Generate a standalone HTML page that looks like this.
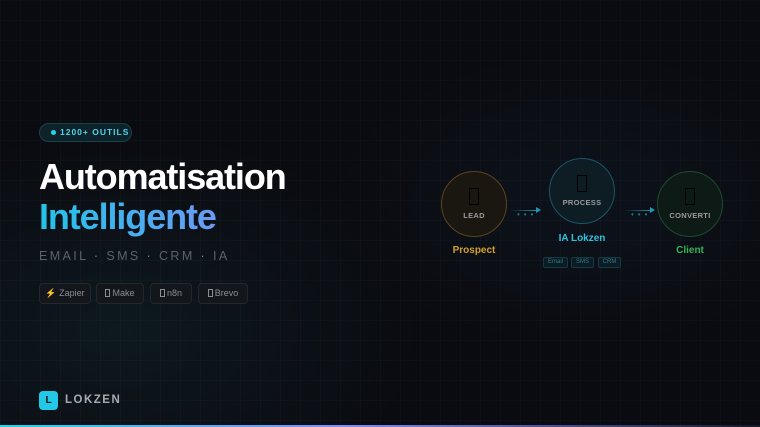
<!DOCTYPE html><html><head><style>
*{margin:0;padding:0;box-sizing:border-box}
body{width:760px;height:427px;overflow:hidden;background:#0a0b10;font-family:"Liberation Sans",sans-serif;position:relative}
.bg{position:absolute;inset:0;background:radial-gradient(ellipse 300px 200px at 120px 330px,rgba(20,50,60,.35),transparent),radial-gradient(ellipse 250px 150px at 580px 200px,rgba(20,40,60,.25),transparent);}
.grid{position:absolute;inset:0;background-image:linear-gradient(rgba(255,255,255,.018) 1px,transparent 1px),linear-gradient(90deg,rgba(255,255,255,.018) 1px,transparent 1px);background-size:20px 20px}
.a{position:absolute}
.badge{left:39px;top:123px;width:93px;height:19px;border:1px solid #17424b;background:#0d2229;border-radius:10px;color:#4fd5ea;font-size:8.5px;font-weight:bold;letter-spacing:1px;line-height:17px;padding-left:20px}
.badge:before{content:"";position:absolute;left:11px;top:6px;width:5px;height:5px;border-radius:50%;background:#22d3ee}
h1{position:absolute;left:39px;top:155px;font-size:36px;font-weight:bold;color:#fff;letter-spacing:-1.1px;line-height:44px}
.h2{top:195px;background:linear-gradient(90deg,#22c4e8,#6b9af5);-webkit-background-clip:text;color:transparent}
.sub{left:39px;top:249px;font-size:12.5px;letter-spacing:2.4px;color:#5d6269}
.sub b{color:#1fa8c4;font-weight:normal}
.chip{top:283px;height:21px;border:1px solid #23272e;background:#13161b;border-radius:4px;color:#8a8f96;font-size:9px;line-height:19px;text-align:center}
.box{display:inline-block;width:5px;height:8px;border:1px solid #8a8f96;vertical-align:-1px;margin-right:2px}
.c{border-radius:50%;width:66px;height:66px;text-align:center;font-size:7.5px;font-weight:bold;letter-spacing:.3px}
.ic{display:block;margin:0 auto;width:10px;height:17px;border:1.5px solid #000;}
.lbl{font-size:10px;font-weight:bold;text-align:center;width:100px}
.tag{top:257px;height:11px;border:1px solid #163844;background:#0c1c24;color:#2d7a8c;font-size:6px;line-height:9px;text-align:center;border-radius:2px}
.arr{height:1px;background:linear-gradient(90deg,transparent,#1f9ab4)}
.dots{font-size:8px;color:#1e7b90;letter-spacing:4px}
</style></head><body>
<div class="bg"></div><div class="grid"></div>
<div class="a badge">1200+ OUTILS</div>
<h1>Automatisation</h1>
<h1 class="h2">Intelligente</h1>
<div class="a sub">EMAIL <b>·</b> SMS <b>·</b> CRM <b>·</b> IA</div>
<div class="a chip" style="left:39px;width:52px">⚡ Zapier</div>
<div class="a chip" style="left:96px;width:48px"><span class="box"></span>Make</div>
<div class="a chip" style="left:150px;width:42px"><span class="box"></span>n8n</div>
<div class="a chip" style="left:198px;width:50px"><span class="box"></span>Brevo</div>

<div class="a c" style="left:441px;top:171px;border:1.5px solid #5a4420;background:#1a1610;color:#9a9a9a;padding-top:16px"><span class="ic"></span><div style="margin-top:6px">LEAD</div></div>
<div class="a c" style="left:549px;top:158px;border:1.5px solid #1d5566;background:#0e1c24;color:#9a9a9a;padding-top:16px"><span class="ic"></span><div style="margin-top:6px">PROCESS</div></div>
<div class="a c" style="left:657px;top:171px;border:1.5px solid #1d4a30;background:#0e1a16;color:#9a9a9a;padding-top:16px"><span class="ic"></span><div style="margin-top:6px">CONVERTI</div></div>
<div class="a arr" style="left:510px;top:210px;width:28px"></div><div class="a" style="left:536px;top:207px;border-left:5px solid #1f9ab4;border-top:3.5px solid transparent;border-bottom:3.5px solid transparent"></div>
<div class="a arr" style="left:624px;top:210px;width:28px"></div><div class="a" style="left:650px;top:207px;border-left:5px solid #1f9ab4;border-top:3.5px solid transparent;border-bottom:3.5px solid transparent"></div>
<div class="a dots" style="left:517px;top:210px">•••</div>
<div class="a dots" style="left:631px;top:210px">•••</div>
<div class="a lbl" style="left:424px;top:245px;color:#d4a02a">Prospect</div>
<div class="a lbl" style="left:532px;top:233px;color:#2fc0de">IA Lokzen</div>
<div class="a lbl" style="left:640px;top:245px;color:#2fb458">Client</div>
<div class="a tag" style="left:543px;top:257px;width:25px">Email</div>
<div class="a tag" style="left:571px;top:257px;width:23px">SMS</div>
<div class="a tag" style="left:598px;top:257px;width:23px">CRM</div>

<div class="a" style="left:39px;top:391px;width:19px;height:19px;border-radius:4px;background:#22c8e6;color:#071016;font-size:10px;font-weight:bold;text-align:center;line-height:19px">L</div>
<div class="a" style="left:65px;top:394px;color:#a8acb2;font-size:11.5px;font-weight:bold;letter-spacing:1.5px">LOKZEN</div>
<div class="a" style="left:0;top:425px;width:760px;height:2px;background:linear-gradient(90deg,#22d3ee,#818cf8 45%,rgba(129,140,248,.1))"></div>
</body></html>
